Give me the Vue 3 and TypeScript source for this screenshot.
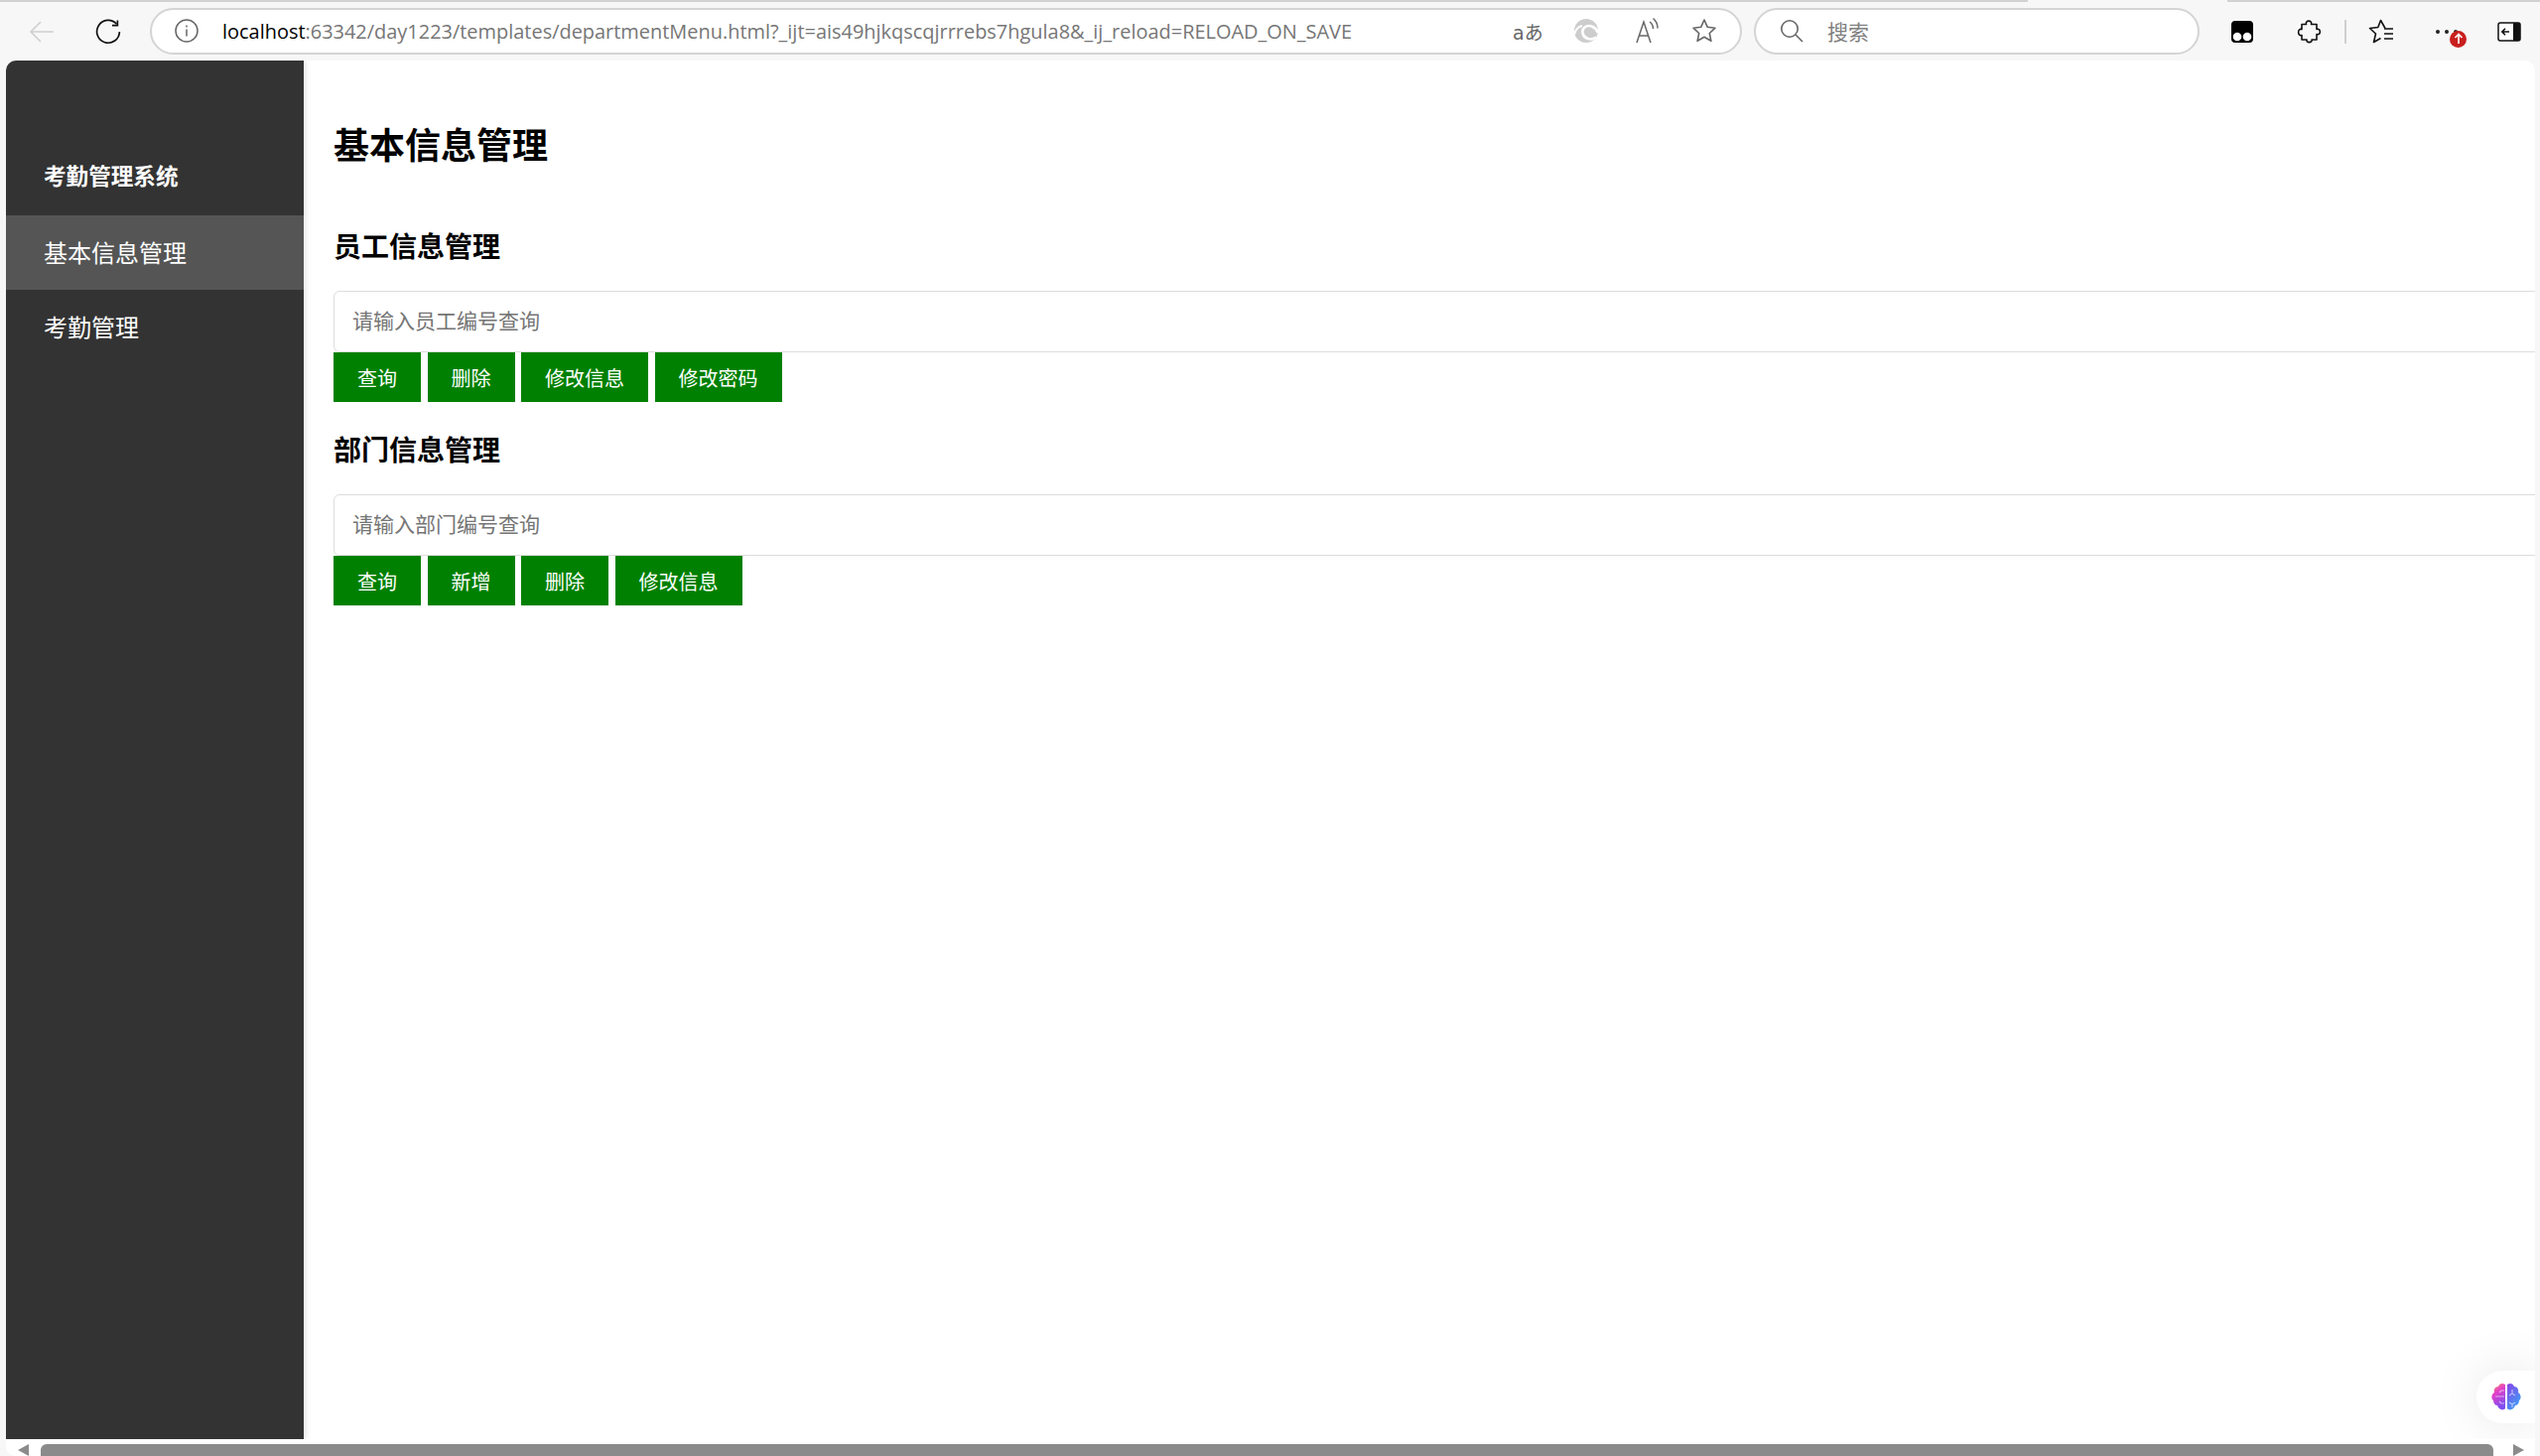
<template>
  <div class="browser">
    <div class="tab-line">
      <span class="tab-line-left"></span>
      <span class="tab-line-right"></span>
    </div>

    <!-- browser toolbar -->
    <header class="toolbar">
      <button class="tool back" aria-label="back">
        <svg width="26" height="24" viewBox="0 0 26 24" fill="none" stroke="#cfcfcf" stroke-width="1.6">
          <path d="M25 12H2M12 2 2 12l10 10" />
        </svg>
      </button>
      <button class="tool reload" aria-label="reload">
        <svg width="26" height="26" viewBox="0 0 26 26" fill="none" stroke="#111" stroke-width="1.7">
          <path d="M21.5 5.2A11.4 11.4 0 1 0 24.4 13" />
          <path d="M22.4 1.5v5.2h-5.4" />
        </svg>
      </button>

      <div class="address pill">
        <svg class="info" width="24" height="24" viewBox="0 0 24 24" fill="none" stroke="#666" stroke-width="1.5">
          <circle cx="12" cy="12" r="11" />
          <path d="M12 10.500v7M12 6.500v2" />
        </svg>
        <div class="url"><span class="host">localhost</span>:63342/day1223/templates/departmentMenu.html?_ijt=ais49hjkqscqjrrrebs7hgula8&amp;_ij_reload=RELOAD_ON_SAVE</div>
        <span class="translate">aあ</span>
        <svg class="edge" width="26" height="26" viewBox="0 0 26 26" fill="none">
          <circle cx="13" cy="13" r="12" fill="#cdcdcd" />
          <path stroke="#fff" stroke-width="2.600" d="M25 15c-2-6-9-9-13.500-5.500-4 3.500-2 10 3.500 11.500 3 .8 6 0 8-1.500" />
          <path stroke="#fff" stroke-width="2" d="M1 17c1-5 4-8 8-9" />
        </svg>
        <svg class="read" width="24" height="28" viewBox="0 0 24 28" fill="none" stroke="#666" stroke-width="1.5">
          <path d="M1 26 8 5l7 21M3.500 19h9" />
          <path d="M14 5c2 1.500 3.500 4 3.500 7M17.500 1.500c3 2.500 4.500 6 4.500 10" />
        </svg>
        <svg class="star" width="26" height="26" viewBox="0 0 26 26" fill="none" stroke="#666" stroke-width="1.6" stroke-linejoin="round">
          <path d="m13 2 3.300 7.300 7.700.9-5.700 5.300 1.600 7.800L13 19.300 6.100 23.300l1.600-7.800L2 10.200l7.700-.9Z" />
        </svg>
      </div>

      <div class="search pill">
        <svg width="24" height="24" viewBox="0 0 24 24" fill="none" stroke="#666" stroke-width="1.6">
          <circle cx="10" cy="10" r="8.200" />
          <path d="m16 16 7 7" />
        </svg>
        <span class="search-text">搜索</span>
      </div>

      <div class="extensions">
        <svg class="monkey" width="24" height="24" viewBox="0 0 24 24">
          <rect x="1" y="1" width="22" height="22" rx="4" fill="#000" />
          <circle cx="7" cy="17" r="4.300" fill="#fff" />
          <circle cx="17" cy="17" r="4.300" fill="#fff" />
        </svg>
        <svg class="puzzle" width="24" height="26" viewBox="0 0 24 26" fill="none" stroke="#111" stroke-width="1.6" stroke-linejoin="round">
          <path d="M9.500 5.500C8 1 16 1 14.500 5.500H20V10.500C24.500 9 24.500 17 20 15.500V21H15C16 24.500 9 24.500 10 21H5V16.500C.5 18 .5 9 5 10.500V5.500Z" />
        </svg>
        <span class="divider"></span>
        <svg class="favs" width="26" height="26" viewBox="0 0 26 26" fill="none" stroke="#111" stroke-width="1.6" stroke-linejoin="round">
          <path d="M17 9.500 12.500 1.500 9.800 8.500 1.500 9.500l6 5.500-2 8.500 7-4" />
          <path d="M16 10h9M16 15h9M16 20h9" />
        </svg>
        <div class="more">
          <i></i><i></i><i></i>
          <span class="badge">
            <svg width="12" height="12" viewBox="0 0 12 12" fill="none" stroke="#fff" stroke-width="1.600">
              <path d="M6 11V2M2.500 5 6 1.500 9.500 5" />
            </svg>
          </span>
        </div>
        <svg class="side" width="24" height="20" viewBox="0 0 24 20">
          <rect x="1" y="1" width="22" height="18" rx="2" fill="#fff" stroke="#111" stroke-width="1.500" />
          <path d="M16 1h5a2 2 0 0 1 2 2v14a2 2 0 0 1-2 2h-5Z" fill="#111" />
          <path d="M12 10H5M8 6.800 4.800 10 8 13.200" fill="none" stroke="#111" stroke-width="1.600" />
        </svg>
      </div>
    </header>

    <!-- page -->
    <div class="window">
      <div class="page">
        <aside class="sidebar">
          <h3 class="brand">考勤管理系统</h3>
          <a
            v-for="item in menu"
            :key="item.label"
            class="menu-item"
            :class="{ active: item.active }"
          >{{ item.label }}</a>
        </aside>

        <main class="content">
          <h1>基本信息管理</h1>
          <section v-for="group in groups" :key="group.title" class="group">
            <h2>{{ group.title }}</h2>
            <input class="query" type="text" :placeholder="group.placeholder" />
            <div class="actions">
              <button v-for="action in group.actions" :key="action" class="btn">{{ action }}</button>
            </div>
          </section>
        </main>

        <div class="assistant">
          <svg width="32" height="32" viewBox="0 0 32 32">
            <defs>
              <linearGradient id="brainLeft" x1="0" y1="0" x2="0.4" y2="1">
                <stop offset="0" stop-color="#f9a13a" />
                <stop offset="0.4" stop-color="#e63fc8" />
                <stop offset="1" stop-color="#7f4df0" />
              </linearGradient>
              <linearGradient id="brainRight" x1="0" y1="0" x2="0.6" y2="1">
                <stop offset="0" stop-color="#8a45e8" />
                <stop offset="1" stop-color="#3f9bf5" />
              </linearGradient>
            </defs>
            <path fill="url(#brainLeft)" d="M15 3c-3-2-6-1-7 2-3 0-5 3-4 6-3 2-3.500 6-1 8 0 3 2 5 4 5 1 4 6 6 8 3Z" />
            <path fill="url(#brainRight)" d="M17 3c3-2 6-1 7 2 3 0 5 3 4 6 3 2 3.500 6 1 8 0 3-2 5-4 5-1 4-6 6-8 3Z" />
            <path fill="none" stroke="#fff" stroke-opacity=".55" stroke-width="1.200" d="M5 15h9M14 9h-3l-2 2M14 22h-3l-2-2M22 8v4l-3 2M22 12l3 2M19 21l3 2 3-2M22 23v3" />
          </svg>
        </div>
      </div>

      <div class="hscroll">
        <span class="arrow left"></span>
        <span class="thumb"></span>
        <span class="arrow right"></span>
      </div>
    </div>
  </div>
</template>

<script setup lang="ts">
interface MenuItem {
  label: string
  active?: boolean
}

interface Group {
  title: string
  placeholder: string
  actions: string[]
}

const menu: MenuItem[] = [
  { label: '基本信息管理', active: true },
  { label: '考勤管理' }
]

const groups: Group[] = [
  {
    title: '员工信息管理',
    placeholder: '请输入员工编号查询',
    actions: ['查询', '删除', '修改信息', '修改密码']
  },
  {
    title: '部门信息管理',
    placeholder: '请输入部门编号查询',
    actions: ['查询', '新增', '删除', '修改信息']
  }
]
</script>

<style>
html,
body {
  margin: 0;
  overflow: hidden;
}
</style>

<style scoped>
.browser {
  width: 100vw;
  height: 100vh;
  display: flex;
  flex-direction: column;
  overflow: hidden;
  background: #f7f7f7;
  font-family: "Noto Sans CJK SC", "Noto Sans", sans-serif;
}

.tab-line {
  height: 2px;
  flex: none;
  display: flex;
  justify-content: space-between;
}

.tab-line-left {
  width: 2043px;
  background: #d2d2d2;
}

.tab-line-right {
  width: 315px;
  background: #d2d2d2;
}

.toolbar {
  height: 59px;
  flex: none;
  display: flex;
  align-items: center;
}

.tool {
  padding: 0;
  border: 0;
  background: none;
  display: flex;
}

.back {
  margin-left: 29px;
}

.reload {
  margin-left: 41px;
}

.pill {
  height: 47px;
  box-sizing: border-box;
  margin-top: -1px;
  display: flex;
  align-items: center;
  background: #fff;
  border: 2px solid #d4d4d4;
  border-radius: 24px;
}

.address {
  width: 1604px;
  margin-left: 29px;
}

.info {
  margin-left: 23px;
}

.url {
  margin-left: 24px;
  width: 1140px;
  font-family: "Open Sans", sans-serif;
  font-size: 19.95px;
  color: #767676;
  white-space: nowrap;
}

.host {
  color: #000;
}

.translate {
  margin-left: 160px;
  width: 41px;
  font-family: "DejaVu Sans", "Noto Sans CJK JP", sans-serif;
  font-size: 19px;
  color: #666;
  white-space: nowrap;
}

.edge {
  margin-left: 20px;
}

.read {
  margin-left: 37px;
}

.star {
  margin-left: 32px;
}

.search {
  width: 449px;
  margin-left: 12px;
}

.search svg {
  margin-left: 24px;
}

.search-text {
  margin-left: 24px;
  font-size: 21px;
  color: #808080;
}

.extensions {
  display: flex;
  align-items: center;
}

.monkey {
  margin-left: 31px;
}

.puzzle {
  margin-left: 43px;
}

.divider {
  width: 2px;
  height: 24px;
  margin-left: 24px;
  background: #cfcfcf;
}

.favs {
  margin-left: 22px;
}

.more {
  position: relative;
  display: flex;
  gap: 5px;
  margin-left: 42px;
}

.more i {
  width: 4px;
  height: 4px;
  border-radius: 50%;
  background: #222;
}

.badge {
  position: absolute;
  left: 14px;
  top: 1px;
  width: 17px;
  height: 17px;
  border-radius: 50%;
  background: #c8201f;
  display: flex;
  align-items: center;
  justify-content: center;
}

.side {
  margin-left: 40px;
}

.window {
  flex: 1;
  min-height: 0;
  margin: 0 5px 0 6px;
  display: flex;
  flex-direction: column;
  overflow: hidden;
  background: #fff;
  border-radius: 10px 10px 0 10px;
}

.page {
  position: relative;
  flex: 1;
  min-height: 0;
  display: flex;
  overflow: hidden;
}

.sidebar {
  width: 300px;
  flex: none;
  background: #333;
  box-shadow: 2px 0 6px rgba(0, 0, 0, 0.1);
  color: #fff;
}

.brand {
  margin: 0;
  padding: 97px 0 21px 38px;
  height: 38px;
  line-height: 38px;
  font-size: 22.6px;
  font-weight: 700;
}

.menu-item {
  display: block;
  height: 75px;
  line-height: 73px;
  padding-left: 38px;
  font-size: 24px;
}

.menu-item.active {
  background: #555;
}

.content {
  flex: 1;
  min-width: 0;
  padding: 58px 0 0 30px;
}

h1,
h2 {
  margin: 0;
  color: #000;
  font-weight: 700;
}

h1 {
  height: 54px;
  line-height: 51px;
  font-size: 36px;
  margin-bottom: 54px;
}

h2 {
  height: 42px;
  line-height: 40px;
  font-size: 28px;
  margin-bottom: 24px;
}

.group {
  margin-bottom: 27px;
}

.query {
  display: block;
  box-sizing: border-box;
  width: 2400px;
  height: 62px;
  padding: 0 18px 4px;
  border: 1px solid #ddd;
  border-radius: 6px;
  outline: none;
  font-family: inherit;
  font-size: 21px;
}

.query::placeholder {
  color: #757575;
}

.actions {
  display: flex;
  gap: 6.5px;
}

.btn {
  height: 50px;
  padding: 0 24px;
  border: 0;
  background: #008000;
  color: #fff;
  font-family: inherit;
  font-size: 20px;
}

.assistant {
  position: absolute;
  right: 0;
  bottom: 16px;
  width: 59px;
  height: 53px;
  display: flex;
  align-items: center;
  justify-content: center;
  background: #fff;
  border-radius: 27px 0 0 27px;
  box-shadow: 0 0 50px rgba(0, 0, 0, 0.1);
}

.hscroll {
  position: relative;
  height: 17px;
  flex: none;
  display: flex;
  align-items: flex-end;
  background: #fff;
}

.thumb {
  width: 2471px;
  height: 12px;
  margin-left: 12px;
  background: #8b8b8b;
  border-radius: 6px 6px 0 0;
}

.arrow {
  width: 0;
  height: 0;
  border-top: 6px solid transparent;
  border-bottom: 6px solid transparent;
}

.arrow.left {
  margin-left: 12px;
  border-right: 11px solid #8b8b8b;
}

.arrow.right {
  margin-left: 20px;
  border-left: 11px solid #8b8b8b;
}
</style>
